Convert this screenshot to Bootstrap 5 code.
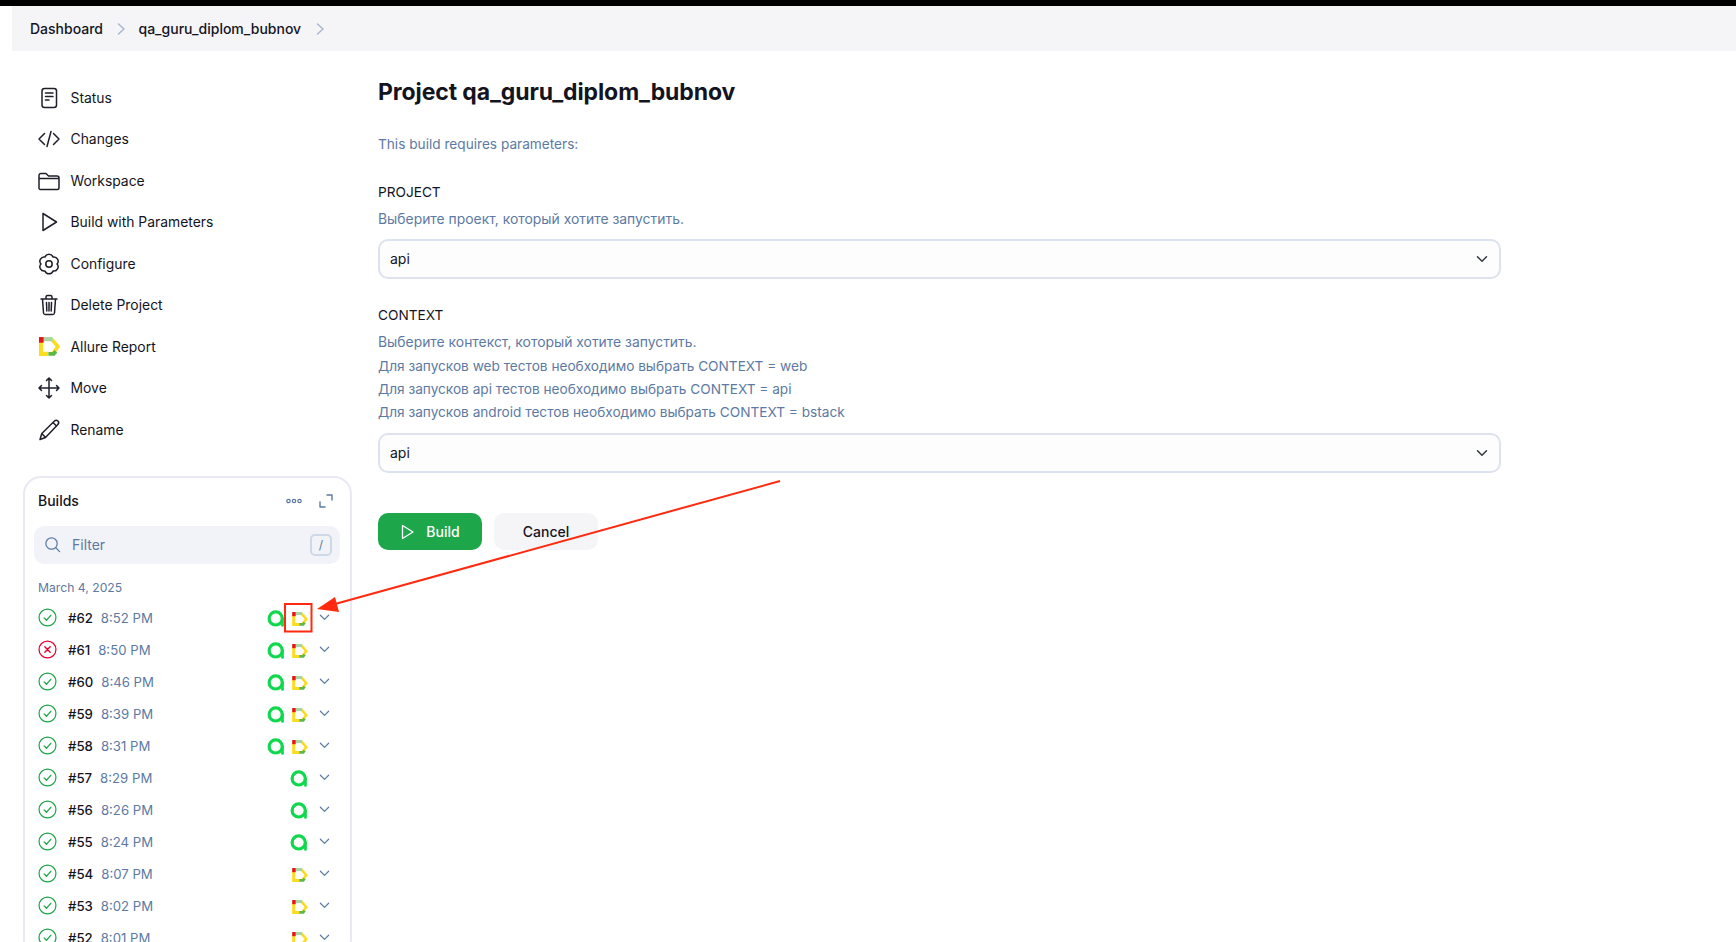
<!DOCTYPE html>
<html lang="en">
<head>
<meta charset="utf-8">
<title>qa_guru_diplom_bubnov</title>
<link href="https://cdn.jsdelivr.net/npm/bootstrap@5.3.0/dist/css/bootstrap.min.css" rel="stylesheet">
<style>
html,body{height:942px;overflow:hidden;}
body{font-family:Inter,"Noto Sans",sans-serif;font-size:14px;color:#14141f;background:#fff;position:relative;}
.topline{height:6px;background:#000;}
.crumbs{height:45px;margin-left:12px;background:#f5f5f8;padding-left:18px;font-weight:500;}
.crumbs .breadcrumb-item+.breadcrumb-item{padding-left:0;}
.crumbs .breadcrumb-item+.breadcrumb-item::before{content:none;}
.crumbs a{color:#14141f;text-decoration:none;}
.crumb-sep{width:12px;height:12px;margin:0 11.5px 0 12px;color:#a9b7cf;}
.crumb-sep-last{margin-left:13px;}
.side{width:378px;padding:26px 0 0 23px;flex:none;}
.side-link{height:41.5px;padding:1px 0 0 14px;gap:9.5px;color:#14141f;font-weight:400;font-size:13.9px;}
.side-link svg{width:24px;height:24px;flex:none;margin-top:-1px;}
.side-link svg.side-logo{width:21px;height:19px;margin:-1px 1.5px 0;}
.line-ico{fill:none;stroke:#1f1f2b;stroke-width:1.5;stroke-linecap:round;stroke-linejoin:round;}
.builds{width:329px;margin-top:25px;border:2px solid #e8e9f2;border-radius:18px;background:#fff;padding:0 10px 0 13px;}
.builds-head{height:44px;margin-top:1px;font-weight:500;}
.head-ico{width:18px;height:18px;color:#5c7aa3;}
.head-ico-dots{margin-right:14px;}
.head-ico-exp{margin-right:5.5px;}
.filter{height:38px;background:#f2f3f8;border-radius:10px;margin-left:-4px;padding:0 8px 0 10px;color:#5c7aa3;gap:11px;margin-top:3px;}
.filter svg{width:17px;height:17px;}
.slash{width:22px;height:22px;border:2px solid #cfd8e6;border-radius:5px;font-size:12px;margin-left:auto;}
.day{color:#5c7aa3;font-size:12.2px;font-weight:400;margin-top:15px;height:18px;line-height:18px;}
.run{height:32px;font-size:13.2px;}
.run-first{margin-top:6px;}
.stat{width:19px;height:19px;margin:-3px 11px 0 0;flex:none;}
.num{font-weight:500;margin-right:8px;}
.when{color:#5c7aa3;}
.ico-a{width:18px;height:18px;margin-left:auto;}
.ico-d{width:16px;height:14px;margin-left:7px;}
.only{margin-left:auto;}
.down{width:11px;height:11px;margin:-3px 10.5px 0 11px;color:#5c7aa3;}
.page-main{padding-top:26px;width:1123px;font-size:13.65px;}
.page-title{font-size:23px;font-weight:700;line-height:31px;margin:0;letter-spacing:-.1px;}
.dim{color:#5c7aa3;}
.note{margin:26px 0 0;line-height:20px;}
.param-name{margin:27.5px 0 0;line-height:20px;font-weight:400;}
.param-next{margin-top:26.3px;}
.hint{margin:6.45px 0 0;line-height:23.3px;}
.hint-wide{font-size:13.9px;}
.pick{height:40px;margin-top:7.35px;background-color:#fdfdfe;border:2px solid #dde3ee;border-radius:10px;font-size:14px;color:#14141f;font-weight:400;padding:0 36px 0 10px;background-position:right 9px center;background-size:16px 12px;}
.pick-next{margin-top:8px;}
.pick:focus{box-shadow:none;border-color:#dde3ee;}
.act{height:37px;width:104px;border-radius:10px;font-size:14px;font-weight:500;border:0;}
.act-go{background:#1ea64a;color:#fff;gap:11px;}
.act-go:hover{background:#1ea64a;color:#fff;}
.act-stop{background:#f5f5f8;color:#14141f;}
.act-row{margin-top:40.5px;gap:12px;}
.act-go svg{width:15px;height:16px;}
.overlay{position:absolute;left:0;top:0;width:1736px;height:942px;pointer-events:none;}
</style>
</head>
<body>
<svg width="0" height="0" class="position-absolute">
  <defs>
    <symbol id="ok" viewBox="0 0 20 20"><circle cx="10" cy="10" r="8.9" fill="none" stroke="#1ea64a" stroke-width="1.3"/><path d="M6.4 10.4l2.5 2.5 4.8-5.4" fill="none" stroke="#1ea64a" stroke-width="1.3" stroke-linecap="round" stroke-linejoin="round"/></symbol>
    <symbol id="bad" viewBox="0 0 20 20"><circle cx="10" cy="10" r="8.9" fill="none" stroke="#e6002f" stroke-width="1.3"/><path d="M7.2 7.2l5.6 5.6M12.8 7.2l-5.6 5.6" fill="none" stroke="#e6002f" stroke-width="1.5" stroke-linecap="round"/></symbol>
    <symbol id="mark-a" viewBox="0 0 17 17"><circle cx="8.2" cy="8" r="6.2" fill="none" stroke="#10d84c" stroke-width="3"/><path d="M14.6 8v6.6" stroke="#10d84c" stroke-width="2.6" stroke-linecap="round"/></symbol>
    <symbol id="mark-d" viewBox="0 0 20 18">
      <path d="M2 2V16H9" fill="none" stroke="#fbdc1e" stroke-width="4"/>
      <path d="M12 2L18 9L13 16" fill="none" stroke="#fbdc1e" stroke-width="3.4"/>
      <path d="M4 2H13" fill="none" stroke="#a9d7a0" stroke-width="4"/>
      <path d="M9 16H14L16 13.5" fill="none" stroke="#5cb848" stroke-width="3.6"/>
      <rect x="0" y="0" width="4.4" height="5.4" fill="#e8141c"/>
    </symbol>
    <symbol id="chev-down" viewBox="0 0 12 12"><path d="M1.5 3.5L6 8l4.5-4.5" fill="none" stroke="currentColor" stroke-width="1.3" stroke-linecap="round" stroke-linejoin="round"/></symbol>
    <symbol id="chev-right" viewBox="0 0 12 12"><path d="M3.5 1L9 6l-5.5 5" fill="none" stroke="currentColor" stroke-width="1.5" stroke-linecap="round" stroke-linejoin="round"/></symbol>
  </defs>
</svg>

<div class="topline"></div>
<nav class="crumbs d-flex align-items-center" aria-label="breadcrumb">
  <ol class="breadcrumb mb-0 align-items-center">
    <li class="breadcrumb-item d-flex align-items-center"><a href="#">Dashboard</a><svg class="crumb-sep"><use href="#chev-right"/></svg></li>
    <li class="breadcrumb-item d-flex align-items-center"><a href="#">qa_guru_diplom_bubnov</a><svg class="crumb-sep crumb-sep-last"><use href="#chev-right"/></svg></li>
  </ol>
</nav>

<div class="d-flex">
  <aside class="side">
    <nav class="nav flex-column">
      <a class="nav-link side-link d-flex align-items-center" href="#"><svg viewBox="0 0 24 24" class="line-ico"><rect x="5" y="2.5" width="14.5" height="19" rx="2.5"/><path d="M8.5 7h7.5M8.5 10.5h7.5M8.5 14h3.5"/></svg>Status</a>
      <a class="nav-link side-link d-flex align-items-center" href="#"><svg viewBox="0 0 24 24" class="line-ico"><path d="M7.5 6.5L2 12l5.5 5.5M16.5 6.5L22 12l-5.5 5.5M14 4.5L10 19.5"/></svg>Changes</a>
      <a class="nav-link side-link d-flex align-items-center" href="#"><svg viewBox="0 0 24 24" class="line-ico"><path d="M2 8V6.5A2 2 0 0 1 4 4.5h5l2.5 2.5H20a2 2 0 0 1 2 2v10a1.5 1.5 0 0 1-1.5 1.5h-17A1.5 1.5 0 0 1 2 18.5V8M2 9.5h20"/></svg>Workspace</a>
      <a class="nav-link side-link d-flex align-items-center" href="#"><svg viewBox="0 0 24 24" class="line-ico"><path d="M6 3.5V20.5L19.5 12Z"/></svg>Build with Parameters</a>
      <a class="nav-link side-link d-flex align-items-center" href="#"><svg viewBox="0 0 24 24" class="line-ico"><path d="M16 5.07A4.2 4.2 0 0 1 20 12A4.2 4.2 0 0 1 16 18.93A4.2 4.2 0 0 1 8 18.93A4.2 4.2 0 0 1 4 12A4.2 4.2 0 0 1 8 5.07A4.2 4.2 0 0 1 16 5.07Z"/><circle cx="12" cy="12" r="3.2"/></svg>Configure</a>
      <a class="nav-link side-link d-flex align-items-center" href="#"><svg viewBox="0 0 24 24" class="line-ico"><path d="M4 6h16M9 6V4a1.5 1.5 0 0 1 1.5-1.5h3A1.5 1.5 0 0 1 15 4v2M5.5 6l1 14a1.8 1.8 0 0 0 1.8 1.5h7.4a1.8 1.8 0 0 0 1.8-1.5l1-14M9.5 9.5l.3 8.5M12 9.5V18M14.5 9.5l-.3 8.5"/></svg>Delete Project</a>
      <a class="nav-link side-link d-flex align-items-center" href="#"><svg viewBox="0 0 20 18" class="side-logo"><use href="#mark-d"/></svg>Allure Report</a>
      <a class="nav-link side-link d-flex align-items-center" href="#"><svg viewBox="0 0 24 24" class="line-ico"><path d="M12 2v20M2 12h20M9.5 4.5L12 2l2.5 2.5M9.5 19.5L12 22l2.5-2.5M4.5 9.5L2 12l2.5 2.5M19.5 9.5L22 12l-2.5 2.5"/></svg>Move</a>
      <a class="nav-link side-link d-flex align-items-center" href="#"><svg viewBox="0 0 24 24" class="line-ico"><path d="M3 21.5l1.8-6L17.5 3a2.4 2.4 0 0 1 3.4 3.4L8.5 19.5ZM4.8 15.5l3.7 4M16 4.5l3.5 3.5"/></svg>Rename</a>
    </nav>

    <section class="builds">
      <div class="builds-head d-flex align-items-center">
        <span class="me-auto">Builds</span>
        <svg class="head-ico head-ico-dots" viewBox="0 0 18 18" fill="none" stroke="currentColor" stroke-width="1.2"><circle cx="3.5" cy="9" r="1.7"/><circle cx="9" cy="9" r="1.7"/><circle cx="14.5" cy="9" r="1.7"/></svg>
        <svg class="head-ico head-ico-exp" viewBox="0 0 18 18" fill="none" stroke="currentColor" stroke-width="1.4" stroke-linecap="round" stroke-linejoin="round"><path d="M10 3h5v5M3 10v5h5"/></svg>
      </div>
      <div class="filter d-flex align-items-center">
        <svg viewBox="0 0 18 18" fill="none" stroke="currentColor" stroke-width="1.3" stroke-linecap="round"><circle cx="8" cy="8" r="6"/><path d="M12.5 12.5L16.5 16.5"/></svg>
        <span>Filter</span>
        <span class="slash d-flex align-items-center justify-content-center">/</span>
      </div>
      <div class="day">March 4, 2025</div>
      <div class="run run-first d-flex align-items-center"><svg class="stat"><use href="#ok"/></svg><span class="num">#62</span><span class="when">8:52 PM</span><svg class="ico-a"><use href="#mark-a"/></svg><svg class="ico-d"><use href="#mark-d"/></svg><svg class="down"><use href="#chev-down"/></svg></div>
      <div class="run d-flex align-items-center"><svg class="stat"><use href="#bad"/></svg><span class="num">#61</span><span class="when">8:50 PM</span><svg class="ico-a"><use href="#mark-a"/></svg><svg class="ico-d"><use href="#mark-d"/></svg><svg class="down"><use href="#chev-down"/></svg></div>
      <div class="run d-flex align-items-center"><svg class="stat"><use href="#ok"/></svg><span class="num">#60</span><span class="when">8:46 PM</span><svg class="ico-a"><use href="#mark-a"/></svg><svg class="ico-d"><use href="#mark-d"/></svg><svg class="down"><use href="#chev-down"/></svg></div>
      <div class="run d-flex align-items-center"><svg class="stat"><use href="#ok"/></svg><span class="num">#59</span><span class="when">8:39 PM</span><svg class="ico-a"><use href="#mark-a"/></svg><svg class="ico-d"><use href="#mark-d"/></svg><svg class="down"><use href="#chev-down"/></svg></div>
      <div class="run d-flex align-items-center"><svg class="stat"><use href="#ok"/></svg><span class="num">#58</span><span class="when">8:31 PM</span><svg class="ico-a"><use href="#mark-a"/></svg><svg class="ico-d"><use href="#mark-d"/></svg><svg class="down"><use href="#chev-down"/></svg></div>
      <div class="run d-flex align-items-center"><svg class="stat"><use href="#ok"/></svg><span class="num">#57</span><span class="when">8:29 PM</span><svg class="ico-a only"><use href="#mark-a"/></svg><svg class="down"><use href="#chev-down"/></svg></div>
      <div class="run d-flex align-items-center"><svg class="stat"><use href="#ok"/></svg><span class="num">#56</span><span class="when">8:26 PM</span><svg class="ico-a only"><use href="#mark-a"/></svg><svg class="down"><use href="#chev-down"/></svg></div>
      <div class="run d-flex align-items-center"><svg class="stat"><use href="#ok"/></svg><span class="num">#55</span><span class="when">8:24 PM</span><svg class="ico-a only"><use href="#mark-a"/></svg><svg class="down"><use href="#chev-down"/></svg></div>
      <div class="run d-flex align-items-center"><svg class="stat"><use href="#ok"/></svg><span class="num">#54</span><span class="when">8:07 PM</span><svg class="ico-d only"><use href="#mark-d"/></svg><svg class="down"><use href="#chev-down"/></svg></div>
      <div class="run d-flex align-items-center"><svg class="stat"><use href="#ok"/></svg><span class="num">#53</span><span class="when">8:02 PM</span><svg class="ico-d only"><use href="#mark-d"/></svg><svg class="down"><use href="#chev-down"/></svg></div>
      <div class="run d-flex align-items-center"><svg class="stat"><use href="#ok"/></svg><span class="num">#52</span><span class="when">8:01 PM</span><svg class="ico-d only"><use href="#mark-d"/></svg><svg class="down"><use href="#chev-down"/></svg></div>
    </section>
  </aside>

  <main class="page-main">
    <h1 class="page-title">Project qa_guru_diplom_bubnov</h1>
    <p class="note dim">This build requires parameters:</p>
    <div class="param-name">PROJECT</div>
    <div class="hint dim hint-wide">Выберите проект, который хотите запустить.</div>
    <select class="form-select pick" aria-label="PROJECT"><option>api</option></select>
    <div class="param-name param-next">CONTEXT</div>
    <div class="hint dim">
      <div class="hint-wide">Выберите контекст, который хотите запустить.</div>
      <div>Для запусков web тестов необходимо выбрать CONTEXT = web</div>
      <div>Для запусков api тестов необходимо выбрать CONTEXT = api</div>
      <div>Для запусков android тестов необходимо выбрать CONTEXT = bstack</div>
    </div>
    <select class="form-select pick pick-next" aria-label="CONTEXT"><option>api</option></select>
    <div class="act-row d-flex">
      <button type="button" class="btn act act-go d-flex align-items-center justify-content-center"><svg viewBox="0 0 15 16" fill="none" stroke="currentColor" stroke-width="1.3" stroke-linejoin="round"><path d="M2.5 1.5V14.5L13 8Z"/></svg>Build</button>
      <button type="button" class="btn act act-stop">Cancel</button>
    </div>
  </main>
</div>

<svg class="overlay" viewBox="0 0 1736 942" aria-hidden="true">
  <rect x="285" y="604" width="26.5" height="27.5" fill="none" stroke="#ff2a0f" stroke-width="2"/>
  <path d="M780 481L335 604" fill="none" stroke="#ff2a0f" stroke-width="2"/>
  <path d="M317 609L335 597L339 612Z" fill="#ff2a0f"/>
</svg>
</body>
</html>
